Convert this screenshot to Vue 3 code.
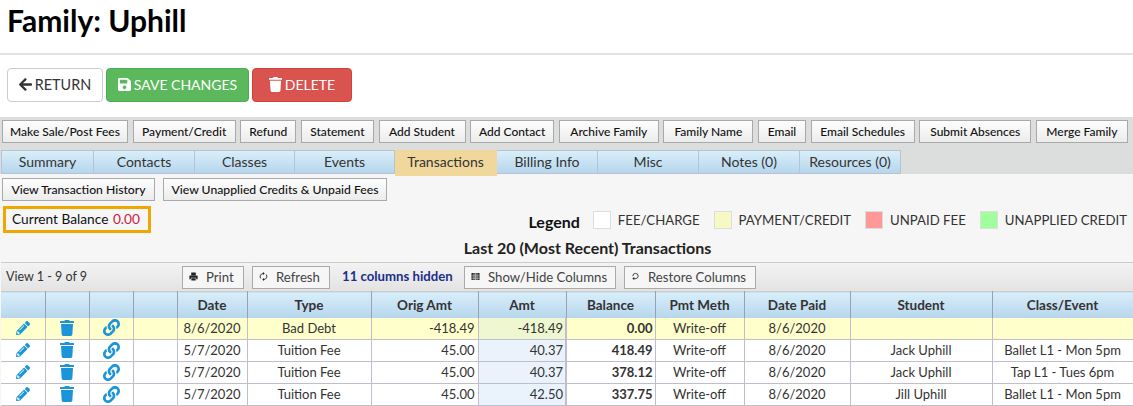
<script setup>
const actions = [
  { label: 'Make Sale/Post Fees', width: 126 }, { label: 'Payment/Credit', width: 103 },
  { label: 'Refund', width: 56 }, { label: 'Statement', width: 73 },
  { label: 'Add Student', width: 87 }, { label: 'Add Contact', width: 84 },
  { label: 'Archive Family', width: 100 }, { label: 'Family Name', width: 90 },
  { label: 'Email', width: 48 }, { label: 'Email Schedules', width: 104 },
  { label: 'Submit Absences', width: 112 }, { label: 'Merge Family', width: 92 }
];
const tabs = ['Summary', 'Contacts', 'Classes', 'Events', 'Transactions', 'Billing Info', 'Misc', 'Notes (0)', 'Resources (0)'];
const legend = [
  { label: 'FEE/CHARGE', color: '#ffffff' },
  { label: 'PAYMENT/CREDIT', color: '#f8f8c4' },
  { label: 'UNPAID FEE', color: '#ff9999' },
  { label: 'UNAPPLIED CREDIT', color: '#a0ff9c' }
];
const columns = [
  { label: '', width: 44 }, { label: '', width: 44 }, { label: '', width: 44 }, { label: '', width: 44 },
  { label: 'Date', width: 70 }, { label: 'Type', width: 124 }, { label: 'Orig Amt', width: 107 },
  { label: 'Amt', width: 88 }, { label: 'Balance', width: 89 }, { label: 'Pmt Meth', width: 89 },
  { label: 'Date Paid', width: 106 }, { label: 'Student', width: 142 }, { label: 'Class/Event', width: 141 }
];
const rows = [
  { date: '8/6/2020', type: 'Bad Debt', orig: '-418.49', amt: '-418.49', balance: '0.00', method: 'Write-off', paid: '8/6/2020', student: '', event: '', credit: true },
  { date: '5/7/2020', type: 'Tuition Fee', orig: '45.00', amt: '40.37', balance: '418.49', method: 'Write-off', paid: '8/6/2020', student: 'Jack Uphill', event: 'Ballet L1 - Mon 5pm' },
  { date: '5/7/2020', type: 'Tuition Fee', orig: '45.00', amt: '40.37', balance: '378.12', method: 'Write-off', paid: '8/6/2020', student: 'Jack Uphill', event: 'Tap L1 - Tues 6pm' },
  { date: '5/7/2020', type: 'Tuition Fee', orig: '45.00', amt: '42.50', balance: '337.75', method: 'Write-off', paid: '8/6/2020', student: 'Jill Uphill', event: 'Ballet L1 - Mon 5pm' }
];
const pencil = 'M497.9 142.1l-46.1 46.1c-4.7 4.7-12.3 4.7-17 0l-111-111c-4.7-4.7-4.7-12.3 0-17l46.1-46.1c18.7-18.7 49.1-18.7 67.9 0l60.1 60.1c18.8 18.7 18.8 49.1 0 67.9zM284.2 99.8L21.6 362.4.4 483.9c-2.9 16.4 11.4 30.6 27.8 27.8l121.5-21.3 262.6-262.6c4.7-4.7 4.7-12.3 0-17l-111-111c-4.8-4.7-12.4-4.7-17.1 0zM124.1 339.9c-5.5-5.5-5.5-14.3 0-19.8l154-154c5.5-5.5 14.3-5.5 19.8 0s5.5 14.3 0 19.8l-154 154c-5.5 5.5-14.3 5.5-19.8 0zM88 424h48v36.3l-64.5 11.3-31.1-31.1L51.7 376H88v48z';
const trash = 'M432 32H312l-9.4-18.7A24 24 0 0 0 281.1 0H166.8a23.72 23.72 0 0 0-21.4 13.3L136 32H16A16 16 0 0 0 0 48v32a16 16 0 0 0 16 16h416a16 16 0 0 0 16-16V48a16 16 0 0 0-16-16zM53.2 467a48 48 0 0 0 47.9 45h245.8a48 48 0 0 0 47.9-45L416 128H32z';
const link = 'M326.612 185.391c59.747 59.809 58.927 155.698.36 214.59-.11.12-.24.25-.36.37l-67.2 67.2c-59.27 59.27-155.699 59.262-214.96 0-59.27-59.26-59.27-155.7 0-214.96l37.106-37.106c9.84-9.84 26.786-3.3 27.294 10.606.648 17.722 3.826 35.527 9.69 52.721 1.986 5.822.567 12.262-3.783 16.612l-13.087 13.087c-28.026 28.026-28.905 73.66-1.155 101.96 28.024 28.579 74.086 28.749 102.325.51l67.2-67.19c28.191-28.191 28.073-73.757 0-101.83-3.701-3.694-7.429-6.564-10.341-8.569a16.037 16.037 0 0 1-6.947-12.606c-.396-10.567 3.348-21.456 11.698-29.806l21.054-21.055c5.521-5.521 14.182-6.199 20.584-1.731a152.482 152.482 0 0 1 20.522 17.197zM467.547 44.449c-59.261-59.262-155.69-59.27-214.96 0l-67.2 67.2c-.12.12-.25.25-.36.37-58.566 58.892-59.387 154.781.36 214.59a152.454 152.454 0 0 0 20.521 17.196c6.402 4.468 15.064 3.789 20.584-1.731l21.054-21.055c8.35-8.35 12.094-19.239 11.698-29.806a16.037 16.037 0 0 0-6.947-12.606c-2.912-2.005-6.64-4.875-10.341-8.569-28.073-28.073-28.191-73.639 0-101.83l67.2-67.19c28.239-28.239 74.3-28.069 102.325.51 27.75 28.3 26.872 73.934-1.155 101.96l-13.087 13.087c-4.35 4.35-5.769 10.79-3.783 16.612 5.864 17.194 9.042 34.999 9.69 52.721.509 13.906 17.454 20.446 27.294 10.606l37.106-37.106c59.271-59.259 59.271-155.699.001-214.959z';
</script>

<template>
  <div class="page">
    <header class="title-bar">
      <h1>Family: Uphill</h1>
    </header>

    <div class="main-buttons">
      <button class="btn btn-return">
        <svg class="btn-icon" viewBox="0 0 448 512"><path fill="currentColor" d="M257.5 445.1l-22.2 22.2c-9.4 9.4-24.6 9.4-33.9 0L7 273c-9.4-9.4-9.4-24.6 0-33.9L201.4 44.7c9.4-9.4 24.6-9.4 33.9 0l22.2 22.2c9.5 9.5 9.3 25-.4 34.3L136.6 216H424c13.3 0 24 10.7 24 24v32c0 13.3-10.7 24-24 24H136.6l120.5 114.8c9.8 9.3 10 24.8.4 34.3z" /></svg>RETURN
      </button>
      <button class="btn btn-save">
        <svg class="btn-icon" viewBox="0 0 448 512"><path fill="currentColor" d="M433.941 129.941l-83.882-83.882A48 48 0 0 0 316.118 32H48C21.49 32 0 53.49 0 80v352c0 26.51 21.49 48 48 48h352c26.51 0 48-21.49 48-48V163.882a48 48 0 0 0-14.059-33.941zM224 416c-35.346 0-64-28.654-64-64 0-35.346 28.654-64 64-64s64 28.654 64 64c0 35.346-28.654 64-64 64zm96-304.52V212c0 6.627-5.373 12-12 12H76c-6.627 0-12-5.373-12-12V108c0-6.627 5.373-12 12-12h228.52c3.183 0 6.235 1.264 8.485 3.515l3.48 3.48A11.996 11.996 0 0 1 320 111.48z" /></svg>SAVE CHANGES
      </button>
      <button class="btn btn-delete">
        <svg class="btn-icon" viewBox="0 0 448 512"><path fill="currentColor" :d="trash" /></svg>DELETE
      </button>
    </div>

    <section class="band">
      <div class="actions">
        <button v-for="a in actions" :key="a.label" class="small-btn" :style="{ width: a.width + 'px' }">{{ a.label }}</button>
      </div>
      <nav class="tabs">
        <div v-for="t in tabs" :key="t" class="tab" :class="{ active: t === 'Transactions' }">{{ t }}</div>
      </nav>
    </section>

    <section class="content">
      <div class="sub-actions">
        <button class="small-btn sub-history">View Transaction History</button>
        <button class="small-btn sub-unapplied">View Unapplied Credits &amp; Unpaid Fees</button>
      </div>

      <div class="summary">
        <div class="balance">Current Balance <span class="balance-value">0.00</span></div>
        <div class="legend">
          <strong class="legend-title">Legend</strong>
          <div v-for="l in legend" :key="l.label" class="legend-item">
            <span class="swatch" :style="{ background: l.color }"></span>{{ l.label }}
          </div>
        </div>
      </div>

      <h2 class="grid-title">Last 20 (Most Recent) Transactions</h2>

      <div class="toolbar">
        <span class="view-count">View 1 - 9 of 9</span>
        <button class="tool-btn tool-print">
          <svg class="tool-icon" viewBox="0 0 10 10"><path fill="#222" d="M2.5 0.5h5v3h-5zM1 4h8a.6.6 0 0 1 .6.6V8H8V6.5H2V8H.4V4.6A.6.6 0 0 1 1 4zM2.6 7h4.8v2.4H2.6z" /></svg>
          Print
        </button>
        <button class="tool-btn tool-refresh">
          <svg class="tool-icon" viewBox="0 0 10 10"><path fill="none" stroke="#222" stroke-width="1" d="M2 7.2A3.4 3.4 0 0 1 4.6 1.7M8 2.8A3.4 3.4 0 0 1 5.4 8.3" /><path fill="#222" d="M4.4 0l2 1.7-2 1.7zM5.6 10l-2-1.7 2-1.7z" /></svg>
          Refresh
        </button>
        <span class="hidden-count">11 columns hidden</span>
        <button class="tool-btn tool-show">
          <svg class="tool-icon" viewBox="0 0 10 10"><path fill="#222" d="M1 1h8a.5.5 0 0 1 .5.5v7a.5.5 0 0 1-.5.5H1a.5.5 0 0 1-.5-.5v-7A.5.5 0 0 1 1 1z" /><path stroke="#eee" stroke-width=".6" d="M.5 3.5h9M.5 5.5h9M.5 7.4h9M3.4 1v8M5 1v8M6.7 1v8" /></svg>
          Show/Hide Columns
        </button>
        <button class="tool-btn tool-restore">
          <svg class="tool-icon" viewBox="0 0 10 10"><path fill="none" stroke="#222" stroke-width=".9" d="M2 4.5A3 3 0 0 1 8 4.5A3 3 0 0 1 5.4 7.4H3" /><path fill="#222" d="M3.6 5.6v3.4L1.4 7.3z" /></svg>
          Restore Columns
        </button>
      </div>

      <table class="grid">
        <colgroup>
          <col v-for="(c, i) in columns" :key="i" :style="{ width: c.width + 'px' }">
        </colgroup>
        <thead>
          <tr>
            <th v-for="(c, i) in columns" :key="i">{{ c.label }}</th>
          </tr>
        </thead>
        <tbody>
          <tr v-for="(r, i) in rows" :key="i" :class="{ credit: r.credit }">
            <td class="center"><svg class="icon-pencil" viewBox="0 0 512 512"><path fill="currentColor" :d="pencil" /></svg></td>
            <td class="center"><svg class="icon-trash" viewBox="0 0 448 512"><path fill="currentColor" :d="trash" /></svg></td>
            <td class="center"><svg class="icon-link" viewBox="0 0 512 512"><path fill="currentColor" :d="link" /></svg></td>
            <td></td>
            <td class="center">{{ r.date }}</td>
            <td class="center">{{ r.type }}</td>
            <td class="right orig">{{ r.orig }}</td>
            <td class="right amt">{{ r.amt }}</td>
            <td class="right bold">{{ r.balance }}</td>
            <td class="center">{{ r.method }}</td>
            <td class="center">{{ r.paid }}</td>
            <td class="center">{{ r.student }}</td>
            <td class="center">{{ r.event }}</td>
          </tr>
        </tbody>
      </table>
    </section>
  </div>
</template>

<style scoped>
.page {
  width: 1133px;
  height: 406px;
  overflow: hidden;
  background: #fff;
  font-family: Lato, "Liberation Sans", sans-serif;
  color: #222;
}

.title-bar {
  height: 53px;
  border-bottom: 2px solid #e3e3e3;
  box-sizing: content-box;
}

.title-bar h1 {
  margin: 0;
  padding: 2px 0 0 7px;
  font-size: 30px;
  line-height: 36px;
  font-weight: 700;
  color: #000;
}

.main-buttons {
  display: flex;
  gap: 3px;
  height: 34px;
  padding: 13px 0 15px 7px;
}

.btn {
  display: flex;
  align-items: center;
  justify-content: center;
  height: 34px;
  box-sizing: border-box;
  border-radius: 4px;
  border: 1px solid transparent;
  font-family: inherit;
  font-size: 14px;
  padding: 0 0 1px;
}

.btn-icon {
  width: 13px;
  height: 15px;
  margin-right: 3px;
}

.btn-return {
  width: 96px;
  background: #fff;
  border-color: #ccc;
  color: #333;
  font-size: 14.4px;
}

.btn-save {
  width: 143px;
  background: #5cb85c;
  border-color: #4cae4c;
  color: #fff;
}

.btn-delete {
  width: 100px;
  background: #d9534f;
  border-color: #d43f3a;
  color: #fff;
}

.band {
  height: 57px;
  background: #dcdddd;
}

.actions {
  display: flex;
  justify-content: space-between;
  padding: 3px 5px 0 2px;
  height: 23px;
}

.small-btn {
  height: 23px;
  padding: 0;
  box-sizing: border-box;
  border: 1px solid #a9a9a9;
  background: linear-gradient(#fdfdfd, #ececec);
  font-family: inherit;
  font-size: 12px;
  font-weight: 500;
  color: #111;
  white-space: nowrap;
}

.tabs {
  display: flex;
  margin: 7px 0 0 1px;
  height: 24px;
}

.tab {
  width: 100px;
  box-sizing: border-box;
  text-align: center;
  font-size: 14px;
  line-height: 22px;
  color: #333;
  background: linear-gradient(#d9eefa, #b6d6ec);
  border: 1px solid #b7c3d3;
  border-left: 0;
}

.tab:first-child {
  width: 93px;
  border-left: 1px solid #b7c3d3;
}

.tab:nth-child(2) {
  width: 101px;
}

.tab:nth-child(5) {
  width: 102px;
}

.tab:nth-child(6),
.tab:nth-child(7),
.tab:nth-child(8),
.tab:nth-child(9) {
  width: 101px;
}

.tab.active {
  height: 26px;
  position: relative;
  background: #f0d89d;
  border-color: #f0d89d;
}

.content {
  height: 232px;
  background: #f6f6f6;
}

.sub-actions {
  display: flex;
  gap: 8px;
  padding: 4px 0 0 2px;
}

.sub-actions .small-btn {
  font-size: 12.2px;
}

.sub-history {
  width: 153px;
}

.sub-unapplied {
  width: 224px;
}

.summary {
  display: flex;
  justify-content: space-between;
  align-items: center;
  margin-top: 5px;
  padding: 0 6px 0 3px;
  height: 27px;
}

.balance {
  width: 148px;
  height: 27px;
  box-sizing: border-box;
  border: 3px solid #f0a800;
  padding-left: 6px;
  font-size: 13.7px;
  line-height: 20px;
  color: #111;
  white-space: nowrap;
}

.balance-value {
  color: #d0213c;
  margin-left: 1px;
}

.legend {
  display: flex;
  align-items: center;
  font-size: 13.2px;
  color: #333;
}

.legend-title {
  font-size: 16px;
  color: #111;
  margin-right: 13px;
  padding-top: 3px;
}

.legend-item {
  display: flex;
  align-items: center;
  margin-left: 14px;
  white-space: nowrap;
}

.legend-title + .legend-item {
  margin-left: 0;
}

.swatch {
  width: 18px;
  height: 18px;
  box-sizing: border-box;
  border: 1px solid #ddd;
  margin-right: 7px;
}

.grid-title {
  margin: 0;
  height: 29px;
  padding-left: 42px;
  text-align: center;
  font-size: 16px;
  line-height: 30px;
  font-weight: 700;
  color: #222;
}

.toolbar {
  display: flex;
  align-items: center;
  height: 28px;
  margin-left: 1px;
  border-top: 1px solid #ccc;
  background: linear-gradient(#f3f3f3, #e3e3e3);
  font-size: 12.5px;
  color: #333;
}

.view-count {
  width: 181px;
  padding: 0 0 2px 5px;
  box-sizing: border-box;
}

.tool-btn {
  display: flex;
  align-items: center;
  height: 23px;
  box-sizing: border-box;
  border: 1px solid #aaa;
  background: #f6f6f6;
  font-family: inherit;
  font-size: 13.2px;
  color: #444;
  padding: 0 0 1px 6px;
  white-space: nowrap;
}

.tool-icon {
  width: 9px;
  height: 9px;
  margin-right: 8px;
}

.tool-print {
  width: 62px;
}

.tool-refresh {
  width: 78px;
  margin-left: 8px;
}

.hidden-count {
  width: 111px;
  margin: 0 11px 0 12px;
  padding-bottom: 2px;
  font-size: 13.2px;
  font-weight: 700;
  color: #1b2f8a;
  white-space: nowrap;
}

.tool-show {
  width: 152px;
}

.tool-restore {
  width: 132px;
  margin-left: 8px;
}

.grid {
  table-layout: fixed;
  border-collapse: collapse;
  width: 1132px;
  margin-left: 1px;
  font-size: 13px;
}

.grid th {
  height: 26px;
  padding: 0;
  box-sizing: border-box;
  background: linear-gradient(#d9eefa, #b6d6ec);
  border-right: 1px solid #97a3ad;
  border-top: 1px solid #ccc;
  font-weight: 700;
  font-size: 13.5px;
  color: #333;
}

.grid td {
  height: 22px;
  padding: 0 0 1px;
  box-sizing: border-box;
  background: #fff;
  border-right: 1px solid #c0bdcd;
  border-bottom: 1px solid #c0bdcd;
  color: #333;
  white-space: nowrap;
}

.grid tr.credit td {
  background: #ffffcc;
}

.grid td.amt {
  background: #eaf3fc;
  border-right-width: 2px;
}

.grid tr.credit td.amt {
  background: #eef7d0;
}

.center {
  text-align: center;
}

.right {
  text-align: right;
  padding-right: 2px !important;
}

.right.orig {
  padding-right: 3px !important;
}

.bold {
  font-weight: 700;
}

.grid svg {
  display: block;
  margin: 0 auto;
  color: #1b95d8;
}

.icon-pencil {
  width: 14px;
  height: 14px;
}

.icon-trash {
  width: 14px;
  height: 16px;
}

.icon-link {
  width: 17px;
  height: 17px;
}
</style>

<style>
html, body {
  margin: 0;
  background: #fff;
}
</style>
